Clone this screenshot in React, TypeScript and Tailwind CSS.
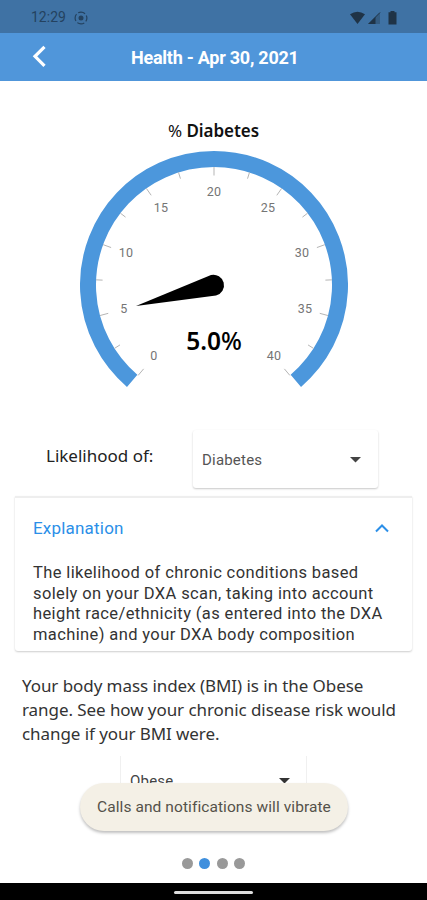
import React from 'react';

const CX = 134;
const CY = 134;

function polar(r: number, deg: number) {
  const a = (deg * Math.PI) / 180;
  return { x: CX + r * Math.cos(a), y: CY + r * Math.sin(a) };
}

const labels = [
  { t: '0', x: 74, y: 209 },
  { t: '5', x: 44, y: 162 },
  { t: '10', x: 46, y: 106 },
  { t: '15', x: 81, y: 61 },
  { t: '20', x: 134, y: 45 },
  { t: '25', x: 188, y: 61 },
  { t: '30', x: 222, y: 106 },
  { t: '35', x: 225, y: 162 },
  { t: '40', x: 194, y: 209 },
];

function Gauge() {
  const start = polar(126, 130.5);
  const end = polar(126, 49.5);
  return (
    <svg width="268" height="240" viewBox="0 0 268 240" className="mx-auto block">
      <path
        d={`M${start.x} ${start.y} A126 126 0 1 1 ${end.x} ${end.y}`}
        fill="none"
        stroke="#4c97dc"
        strokeWidth="16"
      />
      {Array.from({ length: 17 }, (_, i) => {
        const deg = 130 + i * 17.5;
        const a = polar(118, deg);
        const b = polar(i % 2 === 0 ? 109.5 : 111.5, deg);
        return <line key={i} x1={a.x} y1={a.y} x2={b.x} y2={b.y} stroke="#b5b5b5" strokeWidth="1" />;
      })}
      <g className="fill-[#757575] font-['Roboto',sans-serif] text-[12.5px] tracking-[0.3px]" textAnchor="middle">
        {labels.map((l) => (
          <text key={l.t} x={l.x} y={l.y}>
            {l.t}
          </text>
        ))}
      </g>
      <path d="M56 155 L131 124 A10.5 10.5 0 1 1 136 144.400 Z" fill="#000" />
      <text
        x="134"
        y="199"
        textAnchor="middle"
        className="fill-black font-['Noto_Sans',sans-serif] text-[24.5px] font-semibold"
      >
        5.0<tspan className="font-medium">%</tspan>
      </text>
    </svg>
  );
}

function StatusBar() {
  return (
    <div className="flex h-[33px] items-center bg-[#3f72a4] pl-[31px] pr-[29px] pt-[2px] text-[#24425f]">
      <span className="w-[43px] font-['Roboto',sans-serif] text-[14px]">12:29</span>
      <svg width="14" height="14" viewBox="0 0 14 14" fill="none" stroke="currentColor">
        <circle cx="7" cy="7" r="2.500" fill="currentColor" stroke="none" />
        <circle cx="7" cy="7" r="5.900" strokeWidth="1.200" strokeDasharray="7.300 1.970" strokeDashoffset="3.650" />
      </svg>
      <svg width="49" height="16" viewBox="0 0 49 16" className="ml-auto text-[#1f3346]" fill="currentColor">
        <path d="M1 4.300 Q8.500 -1 16 4.300 L8.500 14 Z" />
        <path d="M19.500 14 L31 2.500 V14 Z" opacity=".35" />
        <path d="M19.500 14 L26.500 7 V14 Z" />
        <path d="M19.500 14 L31 2.500" stroke="currentColor" strokeWidth="1" />
        <path d="M39.500 2.200 h2 V1 h4 v1.200 h2 V14.500 H39.500 Z" />
      </svg>
    </div>
  );
}

export default function App() {
  return (
    <div className="relative flex h-[900px] w-[427px] flex-col overflow-hidden bg-white font-['Roboto',sans-serif]">
      <StatusBar />
      <header className="flex h-[48px] items-center bg-[#5096da] pl-[31px]">
        <svg width="17" height="24" viewBox="0 0 17 24" fill="none" stroke="white" strokeWidth="3.200">
          <path d="M13.500 1.800 L4 11.300 L13.500 20.800" />
        </svg>
        <h1 className="ml-[83px] whitespace-nowrap text-[18px] font-bold tracking-[-0.25px] text-white">
          Health - Apr 30, 2021
        </h1>
      </header>

      <h2 className="mt-[38px] h-[24px] text-center font-['Noto_Sans',sans-serif] text-[17px] font-semibold leading-[24px] tracking-[-0.05px] text-[#111]">
        <span className="font-normal">%</span> Diabetes
      </h2>
      <div className="mt-[8px]">
        <Gauge />
      </div>

      <div className="mt-[39px] flex h-[66px] pl-[46px]">
        <span className="w-[147px] pt-[14px] font-['Noto_Sans',sans-serif] text-[17px] leading-[24px] text-[#222]">
          Likelihood of:
        </span>
        <div className="flex h-[58px] w-[185px] items-center justify-between rounded-[3px] pl-[9px] pr-[17px] pt-[2px] text-[15px] tracking-[0.2px] text-[#555] shadow-[0_1px_2px_rgba(0,0,0,0.22)]">
          <span>Diabetes</span>
          <svg width="11" height="6" viewBox="0 0 11 6" fill="#444">
            <path d="M0 0 H11 L5.500 5.500 Z" />
          </svg>
        </div>
      </div>

      <section className="mx-[15px] h-[155px] rounded-b-[3px] border-t-2 border-[#eeeeee] px-[18px] shadow-[0_1px_2px_rgba(0,0,0,0.2)]">
        <div className="flex h-[61px] items-center justify-between pr-[5px] text-[17px] tracking-[0.2px] text-[#2b8fe8]">
          <span>Explanation</span>
          <svg width="14" height="9" viewBox="0 0 14 9" fill="none" stroke="currentColor" strokeWidth="2">
            <path d="M1 7.500 L7 1.500 L13 7.500" />
          </svg>
        </div>
        <p className="mt-[4px] whitespace-nowrap text-[16.5px] leading-[20.7px] tracking-[0.38px] text-[#333]">
          The likelihood of chronic conditions based
          <br />
          solely on your DXA scan, taking into account
          <br />
          height race/ethnicity (as entered into the DXA
          <br />
          machine) and your DXA body composition
        </p>
      </section>

      <p className="ml-[22px] mt-[23px] whitespace-nowrap font-['Noto_Sans',sans-serif] text-[17px] leading-[24px] tracking-[-0.07px] text-[#333]">
        Your body mass index (BMI) is in the Obese
        <br />
        range. See how your chronic disease risk would
        <br />
        change if your BMI were.
      </p>

      <div className="mx-auto mt-[10px] flex h-[50px] w-[187px] items-center justify-between border-x border-[#f0f0f0] pl-[9px] pr-[16px] text-[15px] tracking-[0.2px] text-[#444]">
        <span>Obese</span>
        <svg width="11" height="6" viewBox="0 0 11 6" fill="#333">
          <path d="M0 0 H11 L5.500 5.500 Z" />
        </svg>
      </div>

      <div className="absolute left-[80px] top-[783px] flex h-[48px] w-[268px] items-center justify-center whitespace-nowrap rounded-full bg-[#f4f0e6] pt-px text-[15.5px] tracking-[0.08px] text-[#55524a] shadow-[0_2px_3px_rgba(0,0,0,0.25)]">
        Calls and notifications will vibrate
      </div>

      <div className="mt-auto flex h-[40px] shrink-0 justify-center gap-[6.4px] pt-[15px]">
        <span className="size-[11px] rounded-full bg-[#999]" />
        <span className="size-[11px] rounded-full bg-[#3f8fdd]" />
        <span className="size-[11px] rounded-full bg-[#999]" />
        <span className="size-[11px] rounded-full bg-[#999]" />
      </div>
      <footer className="flex h-[17px] shrink-0 items-center justify-center bg-black pt-[1px]">
        <span className="h-[3px] w-[79px] rounded-full bg-[#ddd]" />
      </footer>
    </div>
  );
}
